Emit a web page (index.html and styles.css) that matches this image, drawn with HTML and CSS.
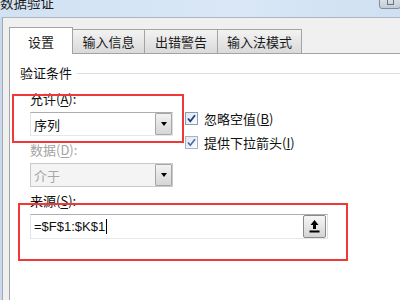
FILE: index.html
```html
<!DOCTYPE html>
<html>
<head>
<meta charset="utf-8">
<title>数据验证</title>
<link rel="stylesheet" href="styles.css">
</head>
<body>

<div class="titlebar">
	<div class="title">数据验证</div>
	<div class="close-btn"><span class="close-glyph"></span></div>
</div>

<div class="frame">
	<div class="dialog">

		<div class="tabs">
			<div class="tab tab-on t1">设置</div>
			<div class="tab t2">输入信息</div>
			<div class="tab t3">出错警告</div>
			<div class="tab t4">输入法模式</div>
		</div>

		<div class="panel">
			<div class="group-title">
				<span>验证条件</span>
				<span class="group-line"></span>
			</div>

			<div class="fields">
				<div class="criteria">
					<div class="col-left">
						<div class="label lbl-allow">允许(<u>A</u>):</div>
						<div class="combo">
							<span class="combo-text">序列</span>
							<span class="combo-btn"><span class="arrow"></span></span>
						</div>
						<div class="label lbl-data off">数据(<u>D</u>):</div>
						<div class="combo combo-off">
							<span class="combo-text">介于</span>
							<span class="combo-btn"><span class="arrow"></span></span>
						</div>
					</div>
					<div class="col-right">
						<div class="check">
							<span class="box">
								<svg width="11" height="11" viewBox="0 0 11 11"><path d="M2 5.5 L4.3 8.3 L9 2.2" fill="none" stroke="#1d3f82" stroke-width="1.8"/></svg>
							</span>
							<span>忽略空值(<u>B</u>)</span>
						</div>
						<div class="check check2">
							<span class="box box-light">
								<svg width="11" height="11" viewBox="0 0 11 11"><path d="M2 5.5 L4.3 8.3 L9 2.2" fill="none" stroke="#4a69a3" stroke-width="1.6"/></svg>
							</span>
							<span>提供下拉箭头(<u>I</u>)</span>
						</div>
					</div>
				</div>

				<div class="label lbl-src">来源(<u>S</u>):</div>
				<div class="source">
					<span class="source-text">=$F$1:$K$1</span><span class="caret"></span>
					<span class="ref-btn">
						<svg width="13" height="15" viewBox="0 0 13 15">
							<path d="M6.5 1 L10.5 6 L8 6 L8 10 L5 10 L5 6 L2.5 6 Z" fill="#000"/>
							<rect x="1.5" y="11.5" width="10" height="2" fill="#000"/>
						</svg>
					</span>
				</div>
			</div>
		</div>

	</div>
</div>

<!-- red marks drawn over the dialog -->
<div class="mark mark-allow"></div>
<div class="mark mark-src"></div>

</body>
</html>
```

FILE: styles.css
```css
body{
	margin:0px;
	padding:0px;
	width:400px;
	height:300px;
	overflow:hidden;
	position:relative;
	background:#f0f0f0;
	font-family:"Noto Sans CJK SC","Liberation Sans",sans-serif;
	font-size:13px;
	color:#111;
	display:flex;
	flex-direction:column;
}

.titlebar{
	height:17px;
	flex:none;
	display:flex;
	justify-content:space-between;
	background:linear-gradient(to right,#d2e2f3,#d9e7f6 60%,#cfe0f2);
	overflow:hidden;
}
.title{
	line-height:13px;
	margin-top:-4px;
	font-size:13.5px;
	color:#1b1b1b;
}
.close-btn{
	width:20px;
	height:16px;
	margin-top:-9px;
	margin-right:-1px;
	border:1px solid #7f8e9f;
	border-radius:3px;
	background:linear-gradient(#eef2f6,#c3ccd6);
	display:flex;
	justify-content:center;
	align-items:flex-end;
}
.close-glyph{
	width:5px;
	height:4px;
	margin-bottom:3px;
	border:1px solid #6b7480;
	border-top:none;
}

.frame{
	flex:1;
	display:flex;
	padding-left:2px;
	background:#c7daef;
}
.dialog{
	flex:1;
	display:flex;
	flex-direction:column;
	background:#f0f0f0;
	border-top:1px solid #aab6c3;
	border-left:1px solid #a7a7a7;
	padding:9px 0 0 6px;
}

.tabs{
	display:flex;
	align-items:flex-end;
	height:26px;
	flex:none;
}
.tab{
	box-sizing:border-box;
	height:24px;
	border:1px solid #a3a3a3;
	border-bottom:none;
	border-left:none;
	background:linear-gradient(#f3f3f3,#e6e6e6 50%,#dadada);
	display:flex;
	justify-content:center;
	align-items:center;
	color:#1a1a1a;
}
.tab-on{
	height:27px;
	margin-bottom:-1px;
	border-left:1px solid #a3a3a3;
	background:#fff;
	position:relative;
	z-index:1;
}
.t1{ width:64px; }
.t2{ width:72px; }
.t3{ width:73px; }
.t4{ width:84px; }

.panel{
	flex:1;
	background:#fff;
	border-top:1px solid #a3a3a3;
	border-left:1px solid #a3a3a3;
	padding-left:10px;
}
.group-title{
	display:flex;
	align-items:center;
	margin-top:11px;
	line-height:16px;
}
.group-line{
	flex:1;
	height:1px;
	margin-left:5px;
	background:#d8dfe6;
}

.fields{
	margin-left:10px;
	width:298px;
}
.criteria{
	display:flex;
	margin-top:10px;
}
.col-left{
	width:143px;
}
.label{
	line-height:16px;
}
.label u{
	text-decoration-thickness:1px;
	text-underline-offset:2px;
}
.off{
	color:#a3a3a3;
}
.lbl-allow{ margin-bottom:5px; }
.lbl-data{ margin-top:6px; margin-bottom:5px; }
.lbl-src{ margin-top:6px; margin-bottom:5px; }

.combo{
	box-sizing:border-box;
	height:24px;
	border:1px solid #abadb3;
	border-color:#abadb3 #dbdfe6 #e3e9ef #e2e3ea;
	background:#fff;
	display:flex;
	align-items:center;
	justify-content:space-between;
	padding:0 0 0 3px;
}
.combo-off{
	background:#f4f4f4;
	color:#a6a6a6;
	border-color:#c9c9c9;
}
.combo-btn{
	width:17px;
	height:22px;
	box-sizing:border-box;
	border:1px solid #a6a6a6;
	border-radius:1px;
	background:linear-gradient(#f2f2f2,#e4e4e4 50%,#d6d6d6);
	display:flex;
	justify-content:center;
	align-items:center;
}
.arrow{
	width:0;
	height:0;
	border-left:3.5px solid transparent;
	border-right:3.5px solid transparent;
	border-top:4px solid #000;
}

.col-right{
	margin-left:12px;
	margin-top:21px;
}
.check{
	display:flex;
	align-items:center;
	height:13px;
	line-height:13px;
}
.check2{
	margin-top:11px;
}
.box{
	width:13px;
	height:13px;
	box-sizing:border-box;
	border:1px solid #8e9bb0;
	background:linear-gradient(135deg,#dde6f1,#fbfcfe);
	display:flex;
	justify-content:center;
	align-items:center;
	margin-right:6px;
}
.box-light{
	border-color:#a9b3c3;
}

.source{
	box-sizing:border-box;
	height:25px;
	border:1px solid #abadb3;
	border-color:#abadb3 #dbdfe6 #e3e9ef #e2e3ea;
	display:flex;
	align-items:center;
	padding-left:3px;
	padding-right:1px;
	font-family:"Liberation Sans",sans-serif;
	font-size:13px;
}
.caret{
	width:1px;
	height:15px;
	background:#000;
	margin-left:1px;
}
.ref-btn{
	margin-left:auto;
	width:23px;
	height:23px;
	box-sizing:border-box;
	border:1px solid #8a8a8a;
	border-radius:2px;
	background:linear-gradient(#f6f6f6,#e6e6e6 50%,#d4d4d4);
	display:flex;
	justify-content:center;
	align-items:center;
}

.mark{
	position:absolute;
	border:2px solid #f03838;
	box-sizing:border-box;
}
.mark-allow{
	left:12px;
	top:94px;
	width:172px;
	height:49px;
}
.mark-src{
	left:18px;
	top:203px;
	width:330px;
	height:58px;
}
```
